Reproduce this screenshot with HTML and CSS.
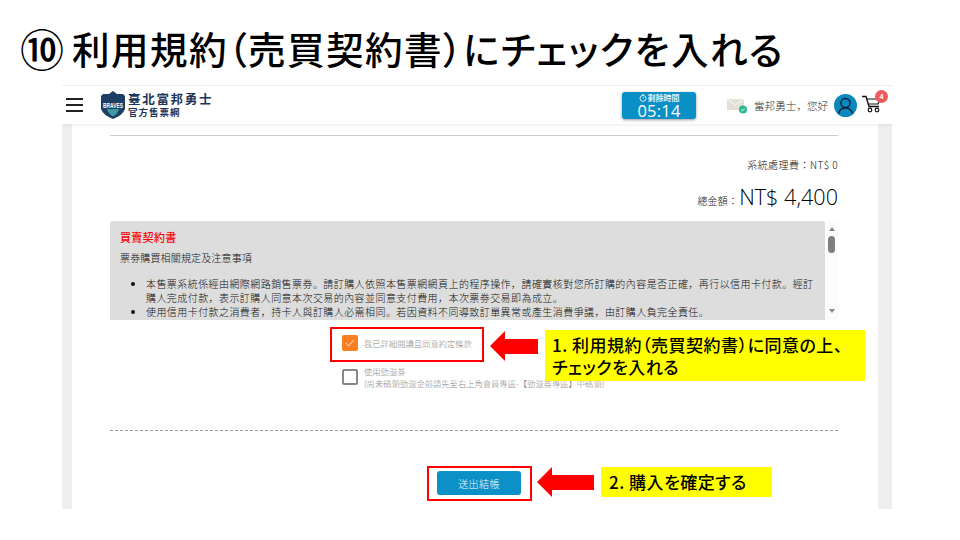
FILE: index.html
```html
<!DOCTYPE html>
<html lang="ja">
<head>
<meta charset="utf-8">
<title>利用規約</title>
<link rel="stylesheet" href="styles.css">
</head>
<body>
<div class="slide">
  <h1 class="title"><span class="title-num">⑩</span><span>利用規約（売買契約書）にチェックを入れる</span></h1>
  <div class="shot">
    <header class="topbar">
      <div class="burger"><i></i><i></i><i></i></div>
      <svg class="logo" width="30" height="30" viewBox="0 0 30 30">
        <path d="M15 1 L19 4 L25 4 L27 6 L27 19 Q25 25 15 29 Q5 25 3 19 L3 6 L5 4 L11 4 Z" fill="#1d3f66"/>
        <path d="M9 19 H21 Q20 24 15 26.5 Q10 24 9 19 Z" fill="#3f9aa0"/>
        <text x="15" y="17.5" class="logo-text" text-anchor="middle" textLength="20" lengthAdjust="spacingAndGlyphs">BRAVES</text>
      </svg>
      <div class="brand">
        <div class="brand-main">臺北富邦勇士</div>
        <div class="brand-sub">官方售票網</div>
      </div>
      <div class="timer">
        <div class="timer-label"><svg width="8" height="8" viewBox="0 0 8 8"><circle cx="4" cy="4.4" r="3" fill="none" stroke="#fff" stroke-width=".8"/><path d="M4 3v1.5M3 .6h2" stroke="#fff" stroke-width=".7"/></svg>剩餘時間</div>
        <div class="timer-value">05:14</div>
      </div>
      <svg class="mail" width="20" height="16" viewBox="0 0 20 16">
        <rect x="0" y="1" width="17" height="11" fill="#e4e0d8"/>
        <path d="M0 1 L8.5 7 L17 1" fill="none" stroke="#f4f2ee" stroke-width="1.2"/>
        <circle cx="16" cy="11.5" r="4" fill="#2db894"/>
        <path d="M14.2 11.5l1.3 1.3 2.3-2.4" fill="none" stroke="#fff" stroke-width=".9"/>
      </svg>
      <div class="greet">當邦勇士，您好</div>
      <svg class="avatar" width="23" height="23" viewBox="0 0 23 23">
        <circle cx="11.5" cy="11.5" r="11.5" fill="#0a87bd"/>
        <circle cx="11.5" cy="9" r="4.6" fill="none" stroke="#10233a" stroke-width="1.5"/>
        <path d="M4.5 19.5 Q6 14 11.5 14 Q17 14 18.5 19.5" fill="none" stroke="#10233a" stroke-width="1.5"/>
      </svg>
      <div class="cart">
        <svg width="20" height="18" viewBox="0 0 20 18">
          <path d="M0 1.5h4l3 10h10" fill="none" stroke="#111" stroke-width="1.4"/>
          <path d="M5 4h13l-2 5H7" fill="none" stroke="#111" stroke-width="1.2"/>
          <circle cx="8" cy="15" r="1.8" fill="none" stroke="#111" stroke-width="1.2"/>
          <circle cx="15" cy="15" r="1.8" fill="none" stroke="#111" stroke-width="1.2"/>
        </svg>
        <span class="badge">4</span>
      </div>
    </header>
    <main class="page">
      <div class="content">
        <div class="fee">系統處理費：NT$ 0</div>
        <div class="total"><span class="total-label">總金額：</span><span class="total-value">NT$ 4,400</span></div>
        <div class="contract-row">
          <section class="contract">
            <h2 class="contract-title">買賣契約書</h2>
            <p class="contract-sub">票券購買相關規定及注意事項</p>
            <ul class="contract-list">
              <li>本售票系統係經由網際網路銷售票券。請訂購人依照本售票網網頁上的程序操作，請確實核對您所訂購的內容是否正確，再行以信用卡付款。經訂購人完成付款，表示訂購人同意本次交易的內容並同意支付費用，本次票券交易即為成立。</li>
              <li>使用信用卡付款之消費者，持卡人與訂購人必需相同。若因資料不同導致訂單異常或產生消費爭議，由訂購人負完全責任。</li>
            </ul>
          </section>
          <div class="scrollbar">
            <span class="arrow-up"></span>
            <span class="thumb"></span>
            <span class="arrow-down"></span>
          </div>
        </div>
        <div class="checks">
          <label class="check-row">
            <span class="box box-on"><svg width="14" height="10" viewBox="0 0 14 10"><path d="M2 5l3 3.4L12 1.5" fill="none" stroke="#fff" stroke-width="1"/></svg></span>
            <span class="check-text">我已詳細閱讀且同意約定條款</span>
          </label>
          <label class="check-row check-row-2">
            <span class="box"></span>
            <span class="check-text">使用勁滋券<br>(尚未碼領勁滋金前請先至右上角會員專區-【勁滋券專區】中碼領)</span>
          </label>
        </div>
        <div class="dash"></div>
        <div class="submit-row"><button class="submit">送出結帳</button></div>
      </div>
    </main>
  </div>

  <div class="redbox redbox-1"></div>
  <div class="arrow arrow-1"><span class="arrow-head"></span><span class="arrow-tail"></span></div>
  <div class="note note-1">1. 利用規約（売買契約書）に同意の上、<br>チェックを入れる</div>

  <div class="redbox redbox-2"></div>
  <div class="arrow arrow-2"><span class="arrow-head"></span><span class="arrow-tail"></span></div>
  <div class="note note-2">2. 購入を確定する</div>
</div>
</body>
</html>
```
FILE: styles.css
```css
* { box-sizing: border-box; }
html, body { margin: 0; padding: 0; background: #fff; }
body { width: 960px; height: 540px; overflow: hidden; font-family: "Noto Sans CJK TC", "Open Sans", sans-serif; }
.slide { position: relative; width: 960px; height: 540px; padding: 20px 0 0 20px; }

.title { display: flex; align-items: center; margin: -1px 0 0; height: 58px; font: 500 37.6px/58px "Noto Sans CJK JP", sans-serif; font-feature-settings: "palt"; letter-spacing: 1.4px; color: #000; white-space: nowrap; }
.title-num { width: 52px; font-size: 44px; letter-spacing: 0; }

.shot { width: 830px; height: 424px; margin: 8px 0 0 42px; background: #eee; overflow: hidden; display: flex; flex-direction: column; }
.topbar { flex: 0 0 39px; display: flex; align-items: center; background: #fff; border-top: 1px solid #eee; padding-left: 4px; box-shadow: 0 1px 3px rgba(0,0,0,.08); position: relative; z-index: 1; }
.burger { width: 17px; display: flex; flex-direction: column; gap: 4px; margin-right: 15px; }
.burger i { display: block; height: 2px; background: #222; }
.logo-text { font: 700 8px "Liberation Sans Narrow", "Liberation Sans", sans-serif; fill: #fff; }
.brand { width: 494px; color: #1d3557; font-weight: 700; padding-bottom: 1px; }
.brand-main { font-size: 12.5px; line-height: 14px; letter-spacing: 1.7px; }
.brand-sub { font-size: 9.5px; line-height: 12px; letter-spacing: 1px; }
.timer { width: 74px; height: 27px; background: #0b8fc7; border-radius: 3px; box-shadow: 0 1px 3px rgba(0,0,0,.4); color: #fff; text-align: center; }
.timer-label { display: flex; justify-content: center; align-items: center; gap: 1px; font-size: 8px; font-weight: 500; line-height: 10px; padding-top: 1px; }
.timer-value { font: 400 16.5px/16px "Open Sans", sans-serif; letter-spacing: .2px; }
.mail { margin-left: 31px; margin-top: 2px; }
.greet { margin-left: 7px; width: 81px; font-size: 10.5px; font-weight: 300; color: #333; letter-spacing: .1px; white-space: nowrap; }
.avatar { margin-left: -1px; }
.cart { position: relative; margin-left: 5px; width: 20px; height: 18px; margin-top: -2px; }
.cart svg { display: block; }
.badge { position: absolute; top: -5px; right: -6px; width: 13px; height: 13px; border-radius: 50%; background: #ef5a5f; color: #fff; font: 700 7px/13px "Liberation Sans", sans-serif; text-align: center; }

.page { flex: 1; margin: 0 14px 0 10px; background: #fff; }
.content { margin: 11px 40px 0 38px; border-top: 1px solid #ccc; }

.fee { margin-top: 22px; text-align: right; font-size: 10px; font-weight: 300; line-height: 14px; color: #111; letter-spacing: .45px; }
.total { display: flex; justify-content: flex-end; align-items: baseline; margin-top: 8px; height: 34px; color: #222; }
.total-label { font-size: 10px; font-weight: 300; letter-spacing: .2px; }
.total-value { font: 300 21.6px/34px "Open Sans", sans-serif; color: #000; margin-left: 1px; }

.contract-row { display: flex; width: 728px; margin-top: 7px; }
.contract { width: 715px; height: 99px; background: #ddd; border-radius: 3px 3px 0 0; padding: 8px 11px 0 10px; overflow: hidden; color: #111; font-size: 10px; font-weight: 300; }
.contract-title { margin: 0; font-size: 11px; line-height: 16px; font-weight: 500; color: #f00; letter-spacing: .3px; }
.contract-sub { margin: 6px 0 0; line-height: 14px; letter-spacing: .15px; }
.contract-list { margin: 12px 0 0; padding: 0 0 0 26px; line-height: 14px; letter-spacing: .43px; }
.scrollbar { width: 13px; position: relative; display: flex; flex-direction: column; align-items: center; background: #fcfcfc; }
.arrow-up { margin-top: 6px; border: 3.5px solid transparent; border-top: 0; border-bottom: 4px solid #888; }
.thumb { width: 7px; height: 17px; margin-top: 5px; border-radius: 4px; background: #7f7f7f; }
.arrow-down { position: absolute; bottom: 7px; border: 3.5px solid transparent; border-bottom: 0; border-top: 4px solid #888; }

.checks { margin-left: 232px; padding-top: 15px; }
.check-row { display: flex; align-items: center; height: 16px; color: #888; font-size: 8.3px; font-weight: 300; line-height: 12px; }
.box { flex: 0 0 16px; width: 16px; height: 16px; border: 2px solid #888; border-radius: 2px; display: flex; align-items: center; justify-content: center; margin-right: 6px; }
.box-on { background: #f97f22; border-color: #f97f22; }
.check-text { white-space: nowrap; }
.check-row-2 { margin-top: 18px; height: 24px; align-items: flex-start; }
.check-row-2 .check-text { margin-top: -4px; }

.dash { border-top: 1px dashed #999; margin-top: 37px; }
.submit-row { display: flex; justify-content: center; margin-top: 40px; }
.submit { width: 84px; height: 24px; border: 0; border-radius: 3px; background: #0b90c8; color: #fff; font: 300 10px "Noto Sans CJK TC", sans-serif; letter-spacing: .4px; margin-left: 10px; }

.redbox { position: absolute; border: 2px solid #f00; }
.redbox-1 { left: 330px; top: 327px; width: 154px; height: 35px; }
.redbox-2 { left: 427px; top: 466px; width: 105px; height: 35px; }

.arrow { position: absolute; display: flex; align-items: center; }
.arrow-head { width: 0; height: 0; border-style: solid; border-color: transparent #f00 transparent transparent; }
.arrow-tail { background: #f00; }
.arrow-1 { left: 490px; top: 331px; }
.arrow-1 .arrow-head { border-width: 15px 15px 15px 0; }
.arrow-1 .arrow-tail { width: 33px; height: 15px; }
.arrow-2 { left: 537px; top: 467px; }
.arrow-2 .arrow-head { border-width: 15px 15px 15px 0; }
.arrow-2 .arrow-tail { width: 42px; height: 15px; }

.note { position: absolute; background: #ff0; color: #000; font: 500 17px/22px "Noto Sans CJK JP", sans-serif; font-feature-settings: "palt"; letter-spacing: .5px; white-space: nowrap; }
.note-1 { left: 545px; top: 330px; width: 320px; height: 51px; padding: 4px 0 0 7px; }
.note-2 { left: 601px; top: 467px; width: 171px; height: 30px; padding: 4px 0 0 8px; }
```
